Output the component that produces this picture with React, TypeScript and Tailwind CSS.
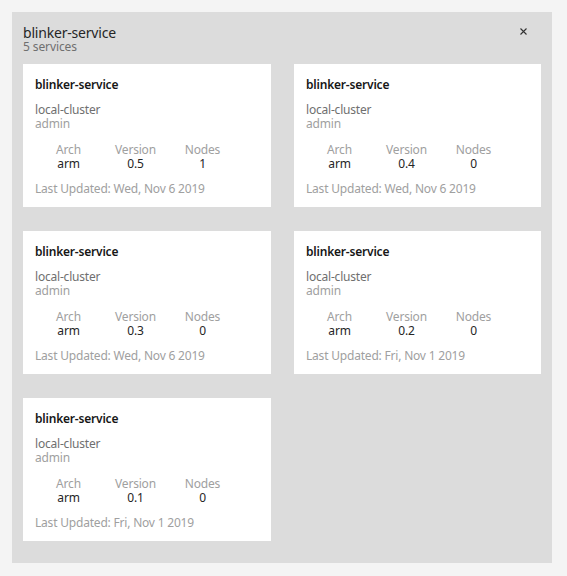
import React from "react";

const services = [
  { version: "0.5", nodes: "1", updated: "Wed, Nov 6 2019" },
  { version: "0.4", nodes: "0", updated: "Wed, Nov 6 2019" },
  { version: "0.3", nodes: "0", updated: "Wed, Nov 6 2019" },
  { version: "0.2", nodes: "0", updated: "Fri, Nov 1 2019" },
  { version: "0.1", nodes: "0", updated: "Fri, Nov 1 2019" },
];

function Card({ version, nodes, updated }: { version: string; nodes: string; updated: string }) {
  return (
    <div className="bg-white h-[143px] px-[12px] pt-[13px] tracking-[-0.2px]">
      <div className="text-[12px] leading-[16px] font-semibold text-[#161616]">blinker-service</div>
      <div className="mt-[10px] text-[12px] leading-[14px] text-[#6f6f6f]">local-cluster</div>
      <div className="text-[12px] leading-[14px] text-[#a0a0a0]">admin</div>
      <div className="mt-[12px] grid grid-cols-[67px_67px_67px] text-center text-[12px] leading-[14px]">
        <div className="text-[#a0a0a0]">Arch</div>
        <div className="text-[#a0a0a0]">Version</div>
        <div className="text-[#a0a0a0]">Nodes</div>
        <div className="text-[#262626]">arm</div>
        <div className="text-[#262626]">{version}</div>
        <div className="text-[#262626]">{nodes}</div>
      </div>
      <div className="mt-[11px] text-[12px] leading-[14px] text-[#a0a0a0]">Last Updated: {updated}</div>
    </div>
  );
}

export default function App() {
  return (
    <div className="w-[567px] h-[576px] bg-[#f4f4f4] pt-[12px] pl-[12px]" style={{ fontFamily: '"Noto Sans", "Open Sans", sans-serif' }}>
      <div className="w-[540px] h-[551px] bg-[#dcdcdc] px-[11px] pt-[13px] relative">
        <div className="text-[14px] leading-[16px] text-[#262626] tracking-[-0.2px]">blinker-service</div>
        <div className="text-[12px] leading-[12px] text-[#6f6f6f] tracking-[-0.1px]">5 services</div>
        <button className="absolute right-[25px] top-[15px] w-[8px] h-[8px] flex items-center justify-center">
          <svg width="7" height="7" viewBox="0 0 7 7">
            <path d="M0.5 0.5 L6.5 6.5 M6.5 0.5 L0.5 6.5" stroke="#333" strokeWidth="1.1" />
          </svg>
        </button>
        <div className="mt-[11px] grid grid-cols-[248px_247px] gap-x-[23px] gap-y-[24px]">
          {services.map((s, i) => (
            <Card key={i} {...s} />
          ))}
        </div>
      </div>
    </div>
  );
}
